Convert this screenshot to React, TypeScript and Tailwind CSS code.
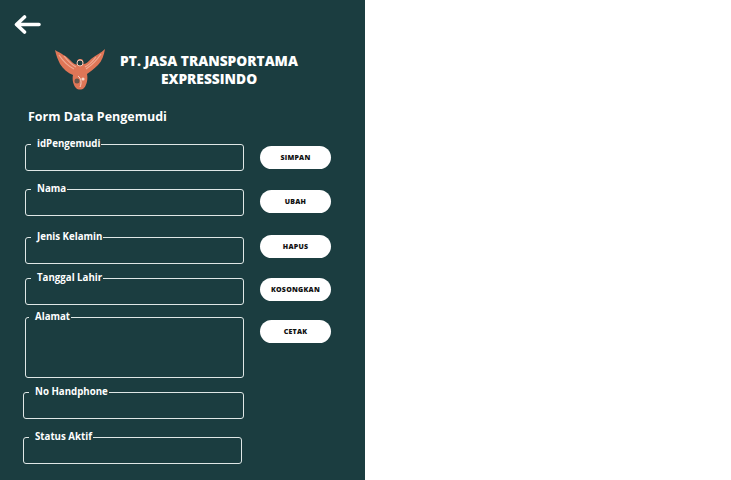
import React from 'react';

interface FieldProps {
  label: string;
  className: string;
  labelClass: string;
}

const Field: React.FC<FieldProps> = ({ label, className, labelClass }) => (
  <div className={`relative rounded-[3px] border border-[#dfe7e6] ${className}`}>
    <span className={`absolute top-[-8px] bg-[#1b3d40] pl-[6px] pr-[1px] text-[9.7px] leading-[14px] font-bold text-white whitespace-nowrap ${labelClass}`}>
      {label}
    </span>
  </div>
);

const ActionButton: React.FC<{ label: string; className?: string }> = ({ label, className = '' }) => (
  <button className={`flex h-[23px] w-[71px] items-center justify-center rounded-full bg-white text-[7px] leading-none font-extrabold tracking-[0.25px] text-[#111] ${className}`}>
    {label}
  </button>
);

const Logo = () => (
  <svg width="52" height="42" viewBox="0 0 52 42" className="shrink-0 blur-[0.4px]">
    <path d="M1 1 C6 4 13 7 18 13 C20 15 22 16 24 15 C22 12 24 10 26 10 C29 10 30 12 29 15 C32 15 34 13 37 10 C42 6 47 4 51 0 C50 6 48 12 44 16 C40 20 36 23 33 25 C34 29 33 36 30 39 C28 41 24 41 22 39 C19 36 18 30 19 26 C14 24 9 20 6 15 C4 11 2 6 1 1 Z" fill="#df7657" />
    <path d="M5 6 C9 12 14 17 20 20 M10 7 C14 12 18 16 22 18 M47 5 C43 11 38 16 32 20 M42 8 C39 12 35 16 31 18" stroke="#f0ab94" strokeWidth="1.2" fill="none" />
    <circle cx="26" cy="14" r="3" fill="#1b3d40" stroke="#f6c9b8" strokeWidth="1" />
    <circle cx="23" cy="32" r="2.5" fill="#1b3d40" opacity="0.6" />
    <circle cx="29" cy="30" r="1.6" fill="#f6d5c8" />
    <path d="M24 27 C27 29 28 34 26 38" stroke="#f6d5c8" strokeWidth="1" fill="none" />
  </svg>
);

export default function App() {
  return (
    <div className="flex h-[480px] w-[731px] bg-white [font-family:'Open_Sans',sans-serif]">
      <div className="flex h-full w-[365px] flex-col bg-[#1b3d40]">
        <div className="pl-[14px] pt-[15px]">
          <svg width="27" height="19" viewBox="0 0 27 19" className="block">
            <path d="M25 9.5 H3 M10.5 2 L2.5 9.5 L10.5 17" stroke="white" strokeWidth="3.6" strokeLinecap="round" strokeLinejoin="round" fill="none" />
          </svg>
        </div>

        <div className="mt-[15px] flex items-start pl-[54px]">
          <Logo />
          <h1 className="ml-[13px] mt-[3px] w-[180px] text-center text-[13.75px] leading-[18px] font-extrabold whitespace-nowrap text-white">
            PT. JASA TRANSPORTAMA
            <br />
            EXPRESSINDO
          </h1>
        </div>

        <h2 className="mt-[17px] pl-[28px] text-[12.5px] leading-[18px] font-bold text-white">Form Data Pengemudi</h2>

        <div className="mt-[18px] flex items-start">
          <div className="flex flex-col">
            <Field label="idPengemudi" labelClass="left-[5px]" className="ml-[25px] h-[27px] w-[218.5px]" />
            <Field label="Nama" labelClass="left-[5px]" className="ml-[25px] mt-[17.5px] h-[27px] w-[218.5px]" />
            <Field label="Jenis Kelamin" labelClass="left-[5px]" className="ml-[25px] mt-[21px] h-[27.5px] w-[218.5px]" />
            <Field label="Tanggal Lahir" labelClass="left-[5px]" className="ml-[25px] mt-[14px] h-[27px] w-[218.5px]" />
            <Field label="Alamat" labelClass="left-[3px]" className="ml-[25px] mt-[12px] h-[60.5px] w-[218.5px]" />
            <Field label="No Handphone" labelClass="left-[5px]" className="ml-[23px] mt-[14px] h-[27px] w-[220.5px]" />
            <Field label="Status Aktif" labelClass="left-[5px]" className="ml-[23px] mt-[18px] h-[27px] w-[218.5px]" />
          </div>

          <div className="ml-[16.5px] mt-[1.5px] flex flex-col">
            <ActionButton label="SIMPAN" />
            <ActionButton label="UBAH" className="mt-[21.5px]" />
            <ActionButton label="HAPUS" className="mt-[21.5px]" />
            <ActionButton label="KOSONGKAN" className="mt-[20px]" />
            <ActionButton label="CETAK" className="mt-[19.5px]" />
          </div>
        </div>
      </div>
    </div>
  );
}
